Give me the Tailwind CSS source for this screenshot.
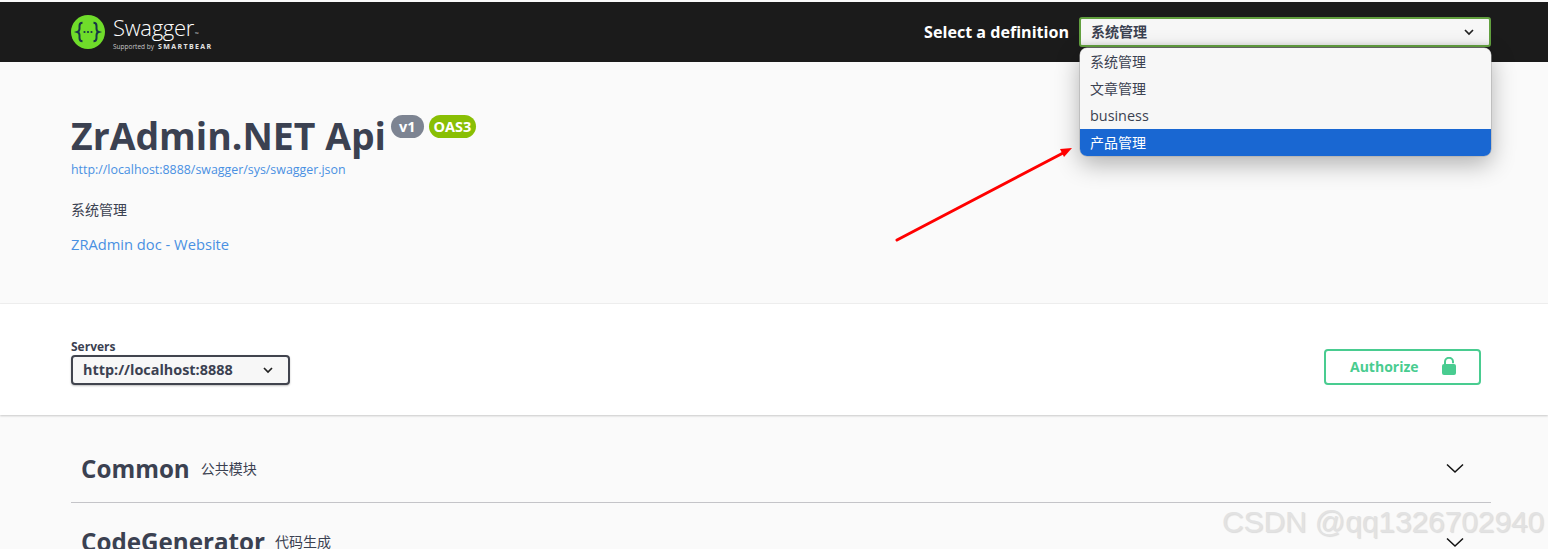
<!DOCTYPE html>
<html lang="zh-CN">
<head>
  <meta charset="UTF-8">
  <title>Swagger UI</title>
  <script src="https://cdn.jsdelivr.net/npm/@tailwindcss/browser@4"></script>
</head>
<body class="relative h-[549px] w-[1548px] overflow-hidden bg-[#fafafa] font-['Open_Sans','Noto_Sans_CJK_SC',sans-serif] text-[#3b4151]">

  <!-- Topbar -->
  <div class="mt-[2px] flex h-[60px] items-center justify-between bg-[#1b1b1b] pl-[71px] pr-[57px]">
    <div class="flex items-center gap-[8px]">
      <svg class="h-[34px] w-[34px]" viewBox="0 0 34 34">
        <circle cx="17" cy="17" r="17" fill="#6fdc2a"/>
        <path d="M11.5 7.7c-2.6 0-3 1.3-3 3.2v2.6c0 1.6-.6 3-2.2 3.5 1.6.5 2.2 1.9 2.2 3.5v2.6c0 1.9.4 3.2 3 3.2M22.5 7.7c2.6 0 3 1.3 3 3.2v2.6c0 1.6.6 3 2.2 3.5-1.6.5-2.2 1.9-2.2 3.5v2.6c0 1.9-.4 3.2-3 3.2" fill="none" stroke="#173646" stroke-width="2"/>
        <circle cx="13.5" cy="17" r="1.1" fill="#173646"/><circle cx="17" cy="17" r="1.1" fill="#173646"/><circle cx="20.5" cy="17" r="1.1" fill="#173646"/>
      </svg>
      <div class="flex flex-col text-white">
        <span class="h-[30px] text-[22px] leading-[30px] font-light tracking-[-0.3px]">Swagger<span class="ml-[1px] align-baseline text-[5px]">™</span></span>
        <span class="flex h-[10px] items-center gap-[4px] text-[6.5px] leading-[10px] text-[#c8c8c8]">Supported by <b class="text-[7px] font-bold tracking-[1.4px] text-[#e4e4e4]">SMARTBEAR</b></span>
      </div>
    </div>
    <div class="flex items-center gap-[10px]">
      <span class="mt-[1px] text-[16.1px] font-bold text-white">Select a definition</span>
      <div class="flex h-[30px] w-[412px] items-center justify-between rounded-[3px] border-2 border-[#62a03f] bg-[#f7f7f7] pl-[10px] pr-[14px] text-sm font-semibold shadow-[inset_0_-6px_6px_-6px_rgba(0,0,0,0.15)]">
        <span>系统管理</span>
        <svg class="h-[12px] w-[12px]" viewBox="0 0 12 12"><path d="M2 4l4 4 4-4" fill="none" stroke="#222" stroke-width="1.7"/></svg>
      </div>
    </div>
  </div>

  <!-- Open select list -->
  <ul class="absolute left-[1080px] top-[48px] z-10 w-[411px] overflow-hidden rounded-[7px] bg-[#f7f7f7] text-sm leading-[27px] shadow-[0_0_0_0.5px_#aaa,0_8px_24px_rgba(0,0,0,0.3)]">
    <li class="h-[27px] pl-[10px]">系统管理</li>
    <li class="h-[27px] pl-[10px]">文章管理</li>
    <li class="h-[27px] pl-[10px] text-[14.4px]">business</li>
    <li class="h-[27px] bg-[#1967d2] pl-[10px] text-white">产品管理</li>
  </ul>

  <!-- Info -->
  <section class="h-[242px] border-b border-[#f0f0f0] pl-[71px] pt-[50px]">
    <div class="flex items-start">
      <h1 class="text-[37.4px] leading-[48px] font-bold">ZrAdmin.NET Api</h1>
      <span class="ml-[5px] mt-[3px] flex h-[23px] items-center rounded-[12px] bg-[#7d8492] px-[8px] text-[14.5px] font-bold text-white">v1</span>
      <span class="ml-[5px] mt-[3px] flex h-[23px] items-center rounded-[12px] bg-[#89bf04] px-[5px] text-[14.5px] font-bold text-white">OAS3</span>
    </div>
    <a class="mt-[1px] block text-[12.4px] leading-[18px] text-[#4990e2]">http://localhost:8888/swagger/sys/swagger.json</a>
    <p class="mt-[21px] text-sm leading-[19px]">系统管理</p>
    <a class="mt-[16px] block text-[14.7px] leading-[19px] text-[#4990e2]">ZRAdmin doc - Website</a>
  </section>

  <!-- Servers -->
  <section class="flex h-[111px] items-start justify-between bg-white pl-[71px] pr-[67px] pt-[35px] shadow-[0_1px_2px_rgba(0,0,0,0.2)]">
    <div>
      <div class="text-xs leading-[16px] font-bold">Servers</div>
      <div class="flex h-[30px] w-[219px] items-center justify-between rounded-[4px] border-2 border-[#41444e] bg-[#f7f7f7] pl-[10px] pr-[14px] text-[14.4px] font-bold shadow-[0_1px_2px_rgba(0,0,0,0.25)]">
        <span>http://localhost:8888</span>
        <svg class="h-[12px] w-[12px]" viewBox="0 0 12 12"><path d="M2 4l4 4 4-4" fill="none" stroke="#222" stroke-width="1.7"/></svg>
      </div>
    </div>
    <button class="mt-[10px] flex h-[36px] w-[157px] items-center rounded-[4px] border-2 border-[#49cc90] bg-white pl-[24px] text-sm font-bold text-[#49cc90]">
      Authorize
      <svg class="mb-[3px] ml-[22px] h-[18px] w-[16px]" viewBox="0 0 16 18"><path d="M4 8V4.8a4 4 0 0 1 8 0v1.4" fill="none" stroke="#49cc90" stroke-width="2"/><rect x="1" y="7" width="14" height="11" rx="2" fill="#49cc90"/></svg>
    </button>
  </section>

  <!-- Tags -->
  <div class="ml-[71px] mr-[57px]">
    <div class="flex h-[88px] items-center justify-between border-b border-[#c4c4c8] pl-[10px] pr-[26px] pt-[21px]">
      <div class="flex items-center gap-[11px]"><h3 class="text-[24.2px] font-bold">Common</h3><span class="text-sm">公共模块</span></div>
      <svg class="h-[20px] w-[20px]" viewBox="0 0 20 20"><path d="M2 5.5l8 7.5 8-7.5" fill="none" stroke="#111" stroke-width="1.5"/></svg>
    </div>
    <div class="flex h-[79px] items-center justify-between pl-[10px] pr-[26px]">
      <div class="flex items-center gap-[10px]"><h3 class="text-[24.2px] font-bold">CodeGenerator</h3><span class="text-sm">代码生成</span></div>
      <svg class="h-[20px] w-[20px]" viewBox="0 0 20 20"><path d="M2 5.5l8 7.5 8-7.5" fill="none" stroke="#111" stroke-width="1.5"/></svg>
    </div>
  </div>

  <!-- Red annotation arrow -->
  <svg class="absolute left-[890px] top-[140px] z-20 h-[105px] w-[190px]" viewBox="0 0 190 105">
    <path d="M7 100L175 12" stroke="#ff0000" stroke-width="3" stroke-linecap="round" fill="none"/>
    <path d="M182 8l-12 1 4 8z" fill="#ff0000"/>
  </svg>

  <!-- Watermark -->
  <div class="absolute left-[1222px] top-[502px] z-20 font-['Liberation_Sans',sans-serif] text-[30px] leading-[40px] tracking-[-0.1px] text-[#e2e2e2] [text-shadow:1px_1px_1px_rgba(0,0,0,0.12)]">CSDN @qq1326702940</div>
</body>
</html>
